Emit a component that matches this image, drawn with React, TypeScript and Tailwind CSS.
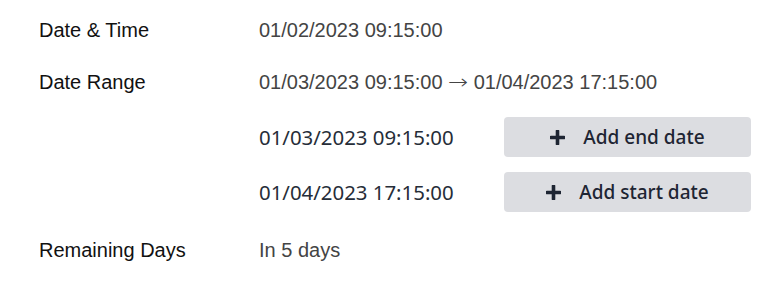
type RangeRowProps = {
    date: string;
    action: string;
};

const PlusIcon = () => (
    <svg width="15" height="15" viewBox="0 0 15 15" className="shrink-0">
        <path d="M7.5 1v13M1 7.5h13" stroke="currentColor" strokeWidth="3.6" strokeLinecap="round" />
    </svg>
);

const RangeRow = ({ date, action }: RangeRowProps) => (
    <div className="flex items-center h-10">
        <span className="w-[245px] text-[20.4px] font-normal text-[#262d38] font-['Noto_Sans',sans-serif]">{date}</span>
        <button
            type="button"
            className="flex items-center justify-center gap-[18px] w-[247px] h-10 rounded bg-[#dcdde1] text-[19px] font-medium text-[#1e2533] font-['Noto_Sans',sans-serif]"
        >
            <PlusIcon />
            {action}
        </button>
    </div>
);

const App = () => {
    return (
        <div className="w-[778px] h-[284px] bg-white font-['Liberation_Sans',Arial,sans-serif] text-[20px] leading-7">
            <div className="flex flex-col pt-4 pl-[39px]">
                <div className="flex">
                    <span className="w-[220px] text-[#111]">Date &amp; Time</span>
                    <span className="text-[#444]">01/02/2023 09:15:00</span>
                </div>
                <div className="flex mt-6">
                    <span className="w-[220px] text-[#111]">Date Range</span>
                    <span className="text-[#444]">
                        01/03/2023 09:15:00{' '}
                        <span className="font-['DejaVu_Sans',sans-serif] font-extralight inline-block w-5 text-center scale-x-[1.2]">→</span>{' '}
                        01/04/2023 17:15:00
                    </span>
                </div>
                <div className="flex flex-col gap-[15px] pl-[220px] mt-[21px]">
                    <RangeRow date="01/03/2023 09:15:00" action="Add end date" />
                    <RangeRow date="01/04/2023 17:15:00" action="Add start date" />
                </div>
                <div className="flex mt-6">
                    <span className="w-[220px] text-[#111]">Remaining Days</span>
                    <span className="text-[#444]">In 5 days</span>
                </div>
            </div>
        </div>
    );
};

export default App;
